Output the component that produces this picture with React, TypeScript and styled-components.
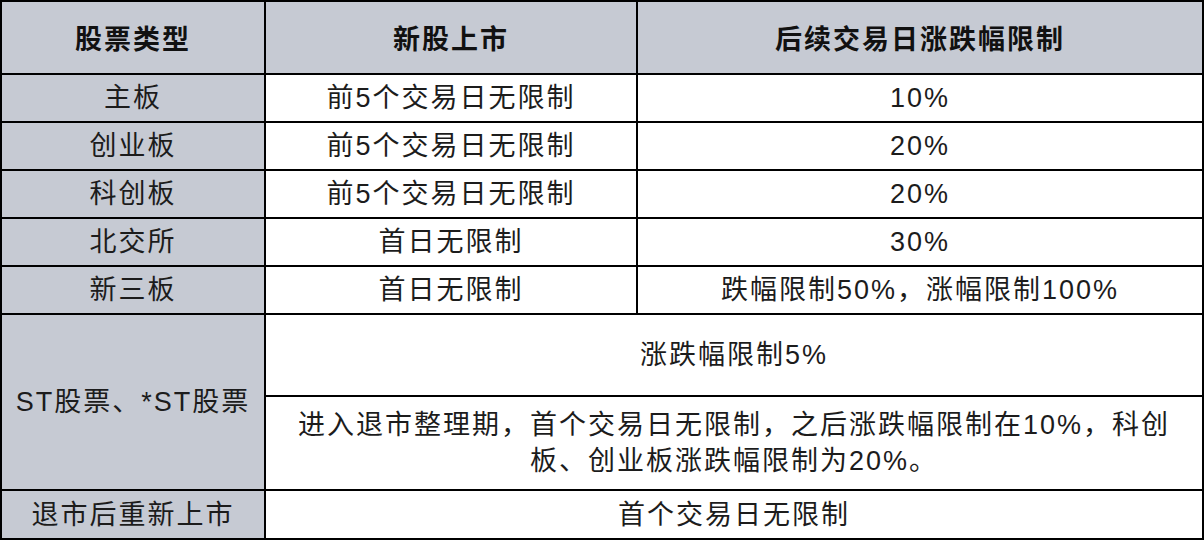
import styled, { createGlobalStyle } from 'styled-components'

const GlobalStyle = createGlobalStyle`
  * {
    box-sizing: border-box;
  }
  body {
    margin: 0;
    background: #ffffff;
  }
`

const GREY = '#c6cad3'
const LINE = '2px solid #000'

const Table = styled.table`
  width: 1204px;
  height: 540px;
  border-collapse: separate;
  border-spacing: 0;
  table-layout: fixed;
  border-top: ${LINE};
  border-left: ${LINE};
  font-family: 'Liberation Sans', 'Noto Sans CJK SC', sans-serif;
  font-size: 27px;
  letter-spacing: 2px;
  color: #1c1c1c;
`

const Row = styled.tr<{ $h: number }>`
  height: ${(p) => p.$h}px;
`

const Cell = styled.td`
  border-right: ${LINE};
  border-bottom: ${LINE};
  padding: 0 12px;
  text-align: center;
  vertical-align: middle;
  line-height: 36px;
  background: #fff;
`

const HeadCell = styled.th`
  border-right: ${LINE};
  border-bottom: ${LINE};
  padding: 0;
  text-align: center;
  vertical-align: middle;
  background: ${GREY};
  font-weight: bold;
  color: #111;
`

const TypeCell = styled(Cell)`
  background: ${GREY};
`

type Listing = { type: string; first: string; after: string }

const listings: Listing[] = [
  { type: '主板', first: '前5个交易日无限制', after: '10%' },
  { type: '创业板', first: '前5个交易日无限制', after: '20%' },
  { type: '科创板', first: '前5个交易日无限制', after: '20%' },
  { type: '北交所', first: '首日无限制', after: '30%' },
  { type: '新三板', first: '首日无限制', after: '跌幅限制50%，涨幅限制100%' },
]

export default function App() {
  return (
    <>
      <GlobalStyle />
      <Table>
        <colgroup>
          <col style={{ width: 264 }} />
          <col style={{ width: 372 }} />
          <col style={{ width: 566 }} />
        </colgroup>
        <thead>
          <Row $h={73}>
            <HeadCell>股票类型</HeadCell>
            <HeadCell>新股上市</HeadCell>
            <HeadCell>后续交易日涨跌幅限制</HeadCell>
          </Row>
        </thead>
        <tbody>
          {listings.map((l) => (
            <Row $h={48} key={l.type}>
              <TypeCell>{l.type}</TypeCell>
              <Cell>{l.first}</Cell>
              <Cell>{l.after}</Cell>
            </Row>
          ))}
          <Row $h={82}>
            <TypeCell rowSpan={2}>ST股票、*ST股票</TypeCell>
            <Cell colSpan={2}>涨跌幅限制5%</Cell>
          </Row>
          <Row $h={94}>
            <Cell colSpan={2}>
              进入退市整理期，首个交易日无限制，之后涨跌幅限制在10%，科创
              <br />
              板、创业板涨跌幅限制为20%。
            </Cell>
          </Row>
          <Row $h={49}>
            <TypeCell>退市后重新上市</TypeCell>
            <Cell colSpan={2}>首个交易日无限制</Cell>
          </Row>
        </tbody>
      </Table>
    </>
  )
}
